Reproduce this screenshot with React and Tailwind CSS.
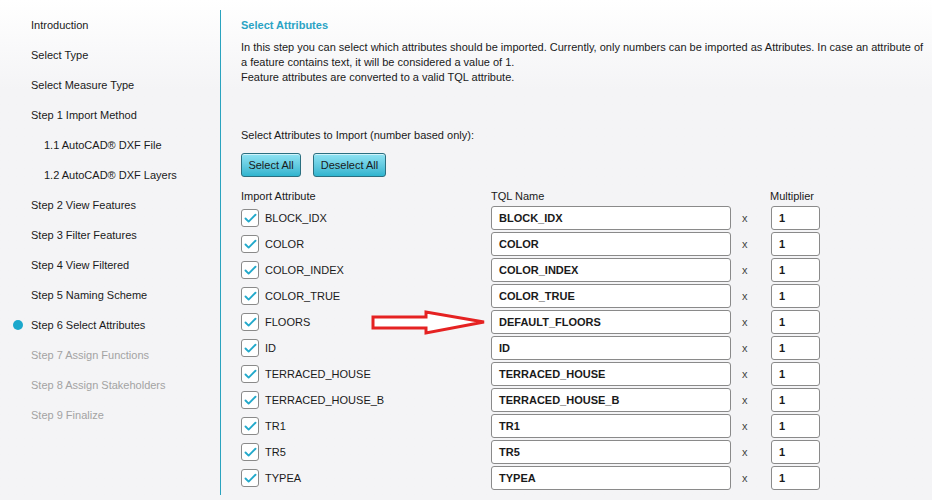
import { Check } from 'lucide-react';

const steps = [
  { label: 'Introduction' },
  { label: 'Select Type' },
  { label: 'Select Measure Type' },
  { label: 'Step 1 Import Method' },
  { label: '1.1 AutoCAD® DXF File', sub: true },
  { label: '1.2 AutoCAD® DXF Layers', sub: true },
  { label: 'Step 2 View Features' },
  { label: 'Step 3 Filter Features' },
  { label: 'Step 4 View Filtered' },
  { label: 'Step 5 Naming Scheme' },
  { label: 'Step 6 Select Attributes', active: true },
  { label: 'Step 7 Assign Functions', disabled: true },
  { label: 'Step 8 Assign Stakeholders', disabled: true },
  { label: 'Step 9 Finalize', disabled: true },
];

const attributes = [
  ['BLOCK_IDX', 'BLOCK_IDX'],
  ['COLOR', 'COLOR'],
  ['COLOR_INDEX', 'COLOR_INDEX'],
  ['COLOR_TRUE', 'COLOR_TRUE'],
  ['FLOORS', 'DEFAULT_FLOORS'],
  ['ID', 'ID'],
  ['TERRACED_HOUSE', 'TERRACED_HOUSE'],
  ['TERRACED_HOUSE_B', 'TERRACED_HOUSE_B'],
  ['TR1', 'TR1'],
  ['TR5', 'TR5'],
  ['TYPEA', 'TYPEA'],
];

function TealButton({ children, width }) {
  return (
    <button
      className={`h-[24px] ${width} rounded-[3px] border border-[#2b6f80] bg-gradient-to-b from-[#8fe3f3] to-[#2eb4cf] text-[11px] text-[#1a1a1a] shadow-[inset_0_1px_0_rgba(255,255,255,0.6)]`}
    >
      {children}
    </button>
  );
}

function AttributeRow({ name, tql }) {
  return (
    <div className="flex items-center h-[24px]">
      <div className="w-[18px] h-[18px] rounded-[3px] border border-[#8a8a8a] bg-white flex items-center justify-center">
        <Check size={15} strokeWidth={3} className="text-[#22a9cb]" />
      </div>
      <span className="ml-[6px] w-[226px]">{name}</span>
      <div className="w-[240px] h-[24px] rounded-[3px] border border-[#8a8a8a] bg-white flex items-center pl-[7px] font-bold">
        {tql}
      </div>
      <span className="w-[40px] pl-[11px] text-[#444]">x</span>
      <div className="w-[49px] h-[24px] rounded-[3px] border border-[#8a8a8a] bg-white flex items-center pl-[7px] font-bold">
        1
      </div>
    </div>
  );
}

export default function App() {
  return (
    <div
      className="relative w-[932px] h-[500px] overflow-hidden flex bg-gradient-to-b from-white to-[#f4f4f6] to-[90px] text-[11px] text-[#1a1a1a]"
      style={{ fontFamily: '"Liberation Sans", Arial, sans-serif' }}
    >
      <aside className="w-[220px] pt-[10px] shrink-0">
        {steps.map((s) => (
          <div
            key={s.label}
            className={`relative h-[30px] flex items-center ${s.sub ? 'pl-[44px]' : 'pl-[31px]'} ${
              s.disabled ? 'text-[#a3a3a3]' : 'text-[#1a1a1a]'
            }`}
          >
            {s.active && (
              <span className="absolute left-[13px] top-[10px] w-[10px] h-[10px] rounded-full bg-[#1ba8cc]" />
            )}
            {s.label}
          </div>
        ))}
      </aside>

      <main className="mt-[10px] mb-[5px] border-l border-[#2aa3bf] pl-[20px] pt-[8px] flex-1 leading-[15px]">
        <h1 className="font-bold text-[#2aa3c4]">Select Attributes</h1>
        <p className="mt-[7px] pr-[4px]">
          In this step you can select which attributes should be imported. Currently, only numbers can be imported as
          Attributes. In case an attribute of a feature contains text, it will be considered a value of 1.
          <br />
          Feature attributes are converted to a valid TQL attribute.
        </p>

        <div className="mt-[43px]">Select Attributes to Import (number based only):</div>

        <div className="mt-[10px] flex gap-[12px]">
          <TealButton width="w-[60px]">Select All</TealButton>
          <TealButton width="w-[73px]">Deselect All</TealButton>
        </div>

        <div className="mt-[12px] flex h-[15px]">
          <span className="w-[250px]">Import Attribute</span>
          <span className="w-[279px]">TQL Name</span>
          <span>Multiplier</span>
        </div>

        <div className="mt-[2px] flex flex-col gap-[2px]">
          {attributes.map(([name, tql]) => (
            <AttributeRow key={name} name={name} tql={tql} />
          ))}
        </div>
      </main>

      <svg className="absolute left-[368px] top-[308px]" width="122" height="30" viewBox="0 0 122 30">
        <polygon
          points="5,9 58,9 58,4 116,14 58,25 58,20 5,20"
          fill="#ffffff"
          stroke="#e52222"
          strokeWidth="3"
          strokeLinejoin="miter"
        />
      </svg>
    </div>
  );
}
